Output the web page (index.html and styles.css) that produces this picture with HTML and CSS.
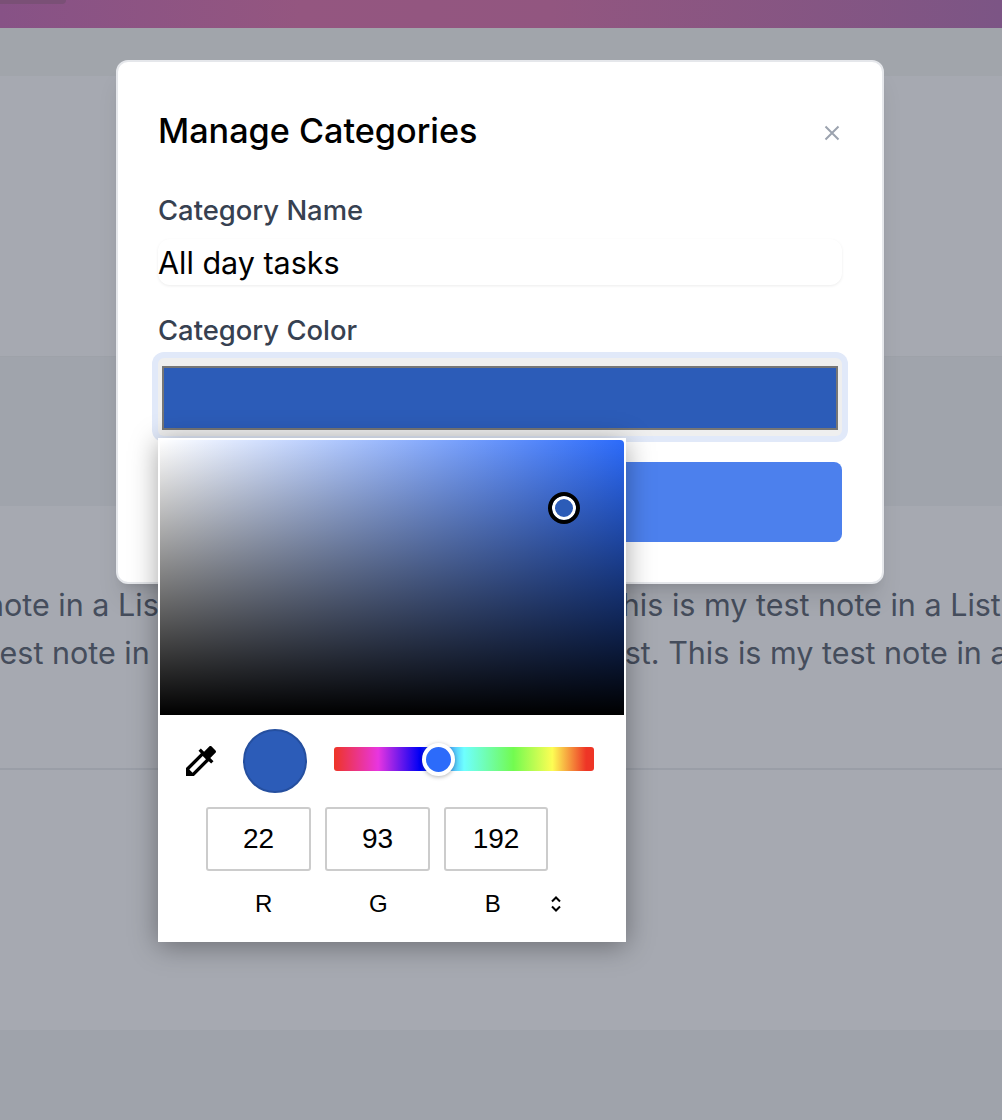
FILE: index.html
```html
<!DOCTYPE html>
<html lang="en">
<head>
<meta charset="utf-8">
<title>Manage Categories</title>
<link rel="stylesheet" href="styles.css">
</head>
<body>
<div class="page">
  <header class="topbar"><div class="pill"></div></header>
  <div class="band band-subnav"></div>
  <section class="band band-main"></section>
  <section class="band band-dark"></section>
  <section class="band band-note">
    <div class="note-line note-line-1">This is my test note in a List. This is my test note in a List. This is my test note in a List.</div>
    <div class="note-line note-line-2">This is my test note in a List. This is my test note in a List. This is my test note in a List.</div>
  </section>
  <section class="band band-lower"></section>
  <footer class="band band-foot"></footer>
</div>

<div class="modal">
  <div class="modal-head">
    <h2 class="modal-title">Manage Categories</h2>
    <svg class="close-icon" viewBox="0 0 16 16" aria-hidden="true"><path d="M1.5 1.5l13 13M14.5 1.5l-13 13"/></svg>
  </div>
  <label class="field-label field-label-first">Category Name</label>
  <input class="name-input" type="text" value="All day tasks">
  <label class="field-label field-label-second">Category Color</label>
  <div class="color-input"><div class="color-swatch"></div></div>
  <div class="save-button"></div>
</div>

<div class="picker">
  <div class="sat-area"><div class="sat-pointer"></div></div>
  <div class="picker-controls">
    <svg class="dropper" viewBox="0 0 24 24" aria-hidden="true"><path d="M20.71 5.63l-2.34-2.34c-.39-.39-1.02-.39-1.41 0l-3.12 3.12-1.93-1.91-1.41 1.41 1.42 1.42L3 16.25V21h4.75l8.92-8.92 1.42 1.42 1.41-1.41-1.92-1.92 3.12-3.12c.4-.4.4-1.03.01-1.42zM6.92 19L5 17.08l8.06-8.06 1.92 1.92L6.92 19z"/></svg>
    <div class="preview"></div>
    <div class="hue-bar"><div class="hue-thumb"></div></div>
  </div>
  <div class="rgb-inputs">
    <div class="rgb-box">22</div>
    <div class="rgb-box">93</div>
    <div class="rgb-box rgb-box-last">192</div>
  </div>
  <div class="rgb-labels">
    <span class="rgb-label">R</span>
    <span class="rgb-label">G</span>
    <span class="rgb-label">B</span>
    <svg class="mode-toggle" viewBox="0 0 12 18" aria-hidden="true"><path d="M2 6.5L6 2.5l4 4M2 11.5l4 4 4-4"/></svg>
  </div>
</div>
</body>
</html>
```

FILE: styles.css
```css
* { box-sizing: border-box; }
html, body { margin: 0; padding: 0; height: 1120px; overflow: hidden; }
body { font-family: Inter, "Liberation Sans", sans-serif; background: #9fa3ab; }

.page { display: flex; flex-direction: column; height: 1120px; overflow: hidden; }
.topbar { height: 28px; background: linear-gradient(90deg, #875286 0%, #945680 30%, #925680 55%, #7c5585 100%); position: relative; }
.pill { position: absolute; left: 0; top: 0; width: 66px; height: 4px; background: #7a5076; border-bottom-right-radius: 4px; }
.band-subnav { height: 48px; background: #a1a5ab; }
.band-main { height: 281px; background: #a6a9b1; border-bottom: 1px solid #9ea2a9; }
.band-dark { height: 149px; background: #a0a4ac; }
.band-note { height: 264px; background: #a6a9b1; padding-top: 75px; border-bottom: 2px solid #9a9ea7; overflow: hidden; }
.band-lower { height: 260px; background: #a6a9b1; }
.band-foot { flex: 1; background: #9fa3ab; }

.note-line { font-size: 30.5px; line-height: 48px; color: #454d5c; white-space: nowrap; }
.note-line-1 { margin-left: -230px; }
.note-line-2 { margin-left: -164px; }

.modal { position: absolute; left: 116px; top: 60px; width: 768px; height: 524px; padding: 49px 40px 40px; background: #fff; border: 2px solid #e5e7eb; border-radius: 12px; box-shadow: 0 20px 25px -5px rgba(0,0,0,.1), 0 8px 10px -6px rgba(0,0,0,.1); }
.modal-head { display: flex; justify-content: space-between; align-items: center; height: 40px; }
.modal-title { margin: 0; font-size: 34.2px; line-height: 40px; font-weight: 450; color: #000; }
.close-icon { width: 16px; height: 16px; margin-right: 2px; margin-top: 4px; fill: none; stroke: #9ca3af; stroke-width: 2; }
.field-label { display: block; font-size: 27.4px; line-height: 30px; font-weight: 450; color: #374151; }
.field-label-first { margin-top: 44px; }
.field-label-second { margin-top: 30px; }
.name-input { display: block; width: 100%; height: 46px; margin-top: 14px; padding: 0; border: 0; outline: 0; border-radius: 12px; background: #fff; box-shadow: 0 1px 3px rgba(0,0,0,.08); font-family: inherit; font-size: 30.5px; color: #000; }
.color-input { height: 78px; margin-top: 13px; padding: 8px 4px 6px; background: #efefef; border-radius: 6px; box-shadow: 0 0 0 6px #e1e9f9; }
.color-swatch { height: 64px; background: #2c5cb8; border: 2px solid #767676; }
.save-button { height: 80px; margin-top: 26px; background: #4c80ed; border-radius: 8px; }

.picker { position: absolute; left: 158px; top: 438px; width: 468px; height: 504px; padding: 2px; background: #fff; box-shadow: 0 4px 26px rgba(0,0,0,.36); font-family: "Liberation Sans", Arial, sans-serif; color: #000; }
.sat-area { position: relative; height: 275px; border-top-right-radius: 4px; background: linear-gradient(to top, #000, rgba(0,0,0,0)), linear-gradient(to right, #fff, #2c6bfa); }
.sat-pointer { position: absolute; left: 388px; top: 52px; width: 32px; height: 32px; border-radius: 50%; background: #2c5cb8; border: 4px solid #000; box-shadow: inset 0 0 0 3px #fff; }
.picker-controls { display: flex; align-items: center; height: 64px; margin-top: 14px; padding-left: 21px; }
.dropper { width: 40px; height: 40px; fill: #000; flex: none; }
.preview { width: 64px; height: 64px; margin-left: 22px; border-radius: 50%; background: #2c5cb8; border: 2px solid #254f9f; flex: none; }
.hue-bar { position: relative; width: 260px; height: 24px; margin-left: 27px; margin-bottom: 5px; border-radius: 3px; background: linear-gradient(90deg, #ee3526 0%, #e835e0 17%, #0000f5 33%, #6effff 50%, #72fb50 69%, #fdfd54 84%, #ee3526 97%); }
.hue-thumb { position: absolute; left: 88px; top: -4px; width: 33px; height: 33px; border-radius: 50%; background: #2c6bfa; border: 4px solid #fff; box-shadow: 0 1px 4px rgba(0,0,0,.3); }
.rgb-inputs { display: flex; gap: 14px; margin-top: 14px; padding-left: 46px; }
.rgb-box { display: flex; align-items: center; justify-content: center; width: 105px; height: 64px; border: 2px solid #ccc; border-radius: 3px; font-size: 28px; }
.rgb-box-last { width: 104px; }
.rgb-labels { display: flex; align-items: center; height: 32px; margin-top: 17px; padding-left: 46.5px; }
.rgb-label { width: 114.5px; text-align: center; font-size: 24px; line-height: 32px; }
.mode-toggle { width: 12px; height: 18px; fill: none; stroke: #000; stroke-width: 2; flex: none; }
```
